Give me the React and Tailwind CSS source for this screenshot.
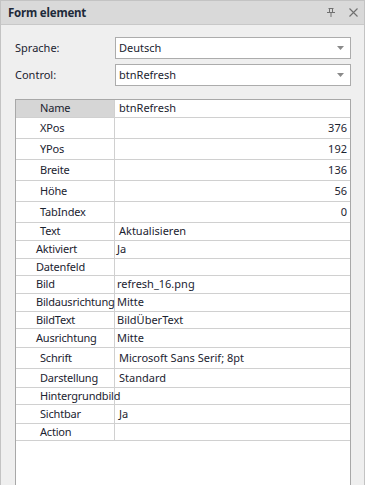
import React from "react";

const rows = [
  { k: "Name", v: "btnRefresh", h: 18, sel: true, big: true },
  { k: "XPos", v: "376", h: 21, right: true, big: true },
  { k: "YPos", v: "192", h: 21, right: true, big: true },
  { k: "Breite", v: "136", h: 21, right: true, big: true },
  { k: "Höhe", v: "56", h: 21, right: true, big: true },
  { k: "TabIndex", v: "0", h: 21, right: true, big: true },
  { k: "Text", v: "Aktualisieren", h: 18, big: true },
  { k: "Aktiviert", v: "Ja", h: 18 },
  { k: "Datenfeld", v: "", h: 17 },
  { k: "Bild", v: "refresh_16.png", h: 18 },
  { k: "Bildausrichtung", v: "Mitte", h: 18 },
  { k: "BildText", v: "BildÜberText", h: 17 },
  { k: "Ausrichtung", v: "Mitte", h: 19 },
  { k: "Schrift", v: "Microsoft Sans Serif; 8pt", h: 21, big: true },
  { k: "Darstellung", v: "Standard", h: 19, big: true },
  { k: "Hintergrundbild", v: "", h: 17, big: true },
  { k: "Sichtbar", v: "Ja", h: 19, big: true },
  { k: "Action", v: "", h: 17, big: true },
];

function Caret() {
  return (
    <svg width="7" height="4" viewBox="0 0 7 4" className="shrink-0">
      <path d="M0 0H7L3.5 4Z" fill="#8a8a8a" />
    </svg>
  );
}

function Select({ value }) {
  return (
    <div className="w-[236px] h-[22px] bg-white border border-[#acacac] flex items-center pl-[3px] pr-[6px] justify-between">
      <span>{value}</span>
      <Caret />
    </div>
  );
}

export default function App() {
  return (
    <div
      className="w-[366px] h-[485px] bg-white overflow-hidden text-[11px] text-[#1b2330]"
      style={{ fontFamily: '"Noto Sans", "Open Sans", sans-serif' }}
    >
      <div className="w-[365px] h-full border-x border-t border-[#c3c3c3] bg-[#efefef] flex flex-col">
        <div className="h-[24px] shrink-0 bg-[#d9d9d9] border-b border-[#c8c8c8] flex items-center justify-between pl-[7px] pr-[6px]">
          <span className="font-bold text-[11.5px] tracking-[-0.2px] text-[#1e2a3a]">Form element</span>
          <div className="flex items-center gap-[14px]">
            <svg width="8" height="9" viewBox="0 0 8 9">
              <path d="M1.5 0.5H6.5M2.5 0.5V4.5M5.5 0.5V4.5M0 4.5H8M4 4.5V9" stroke="#707070" strokeWidth="1" fill="none" />
            </svg>
            <svg width="9" height="9" viewBox="0 0 9 9">
              <path d="M0.5 0.5L8.5 8.5M8.5 0.5L0.5 8.5" stroke="#707070" strokeWidth="1.1" fill="none" />
            </svg>
          </div>
        </div>
        <div className="flex-1 flex flex-col pl-[14px] pr-[13px] pt-[12px]">
          <div className="flex items-center">
            <span className="w-[100px]">Sprache:</span>
            <Select value="Deutsch" />
          </div>
          <div className="flex items-center mt-[5px]">
            <span className="w-[100px]">Control:</span>
            <Select value="btnRefresh" />
          </div>
          <div className="mt-[13px] w-[336px] h-[400px] shrink-0 bg-white border border-[#a8a8a8] flex flex-col">
            {rows.map((r) => (
              <div
                key={r.k}
                className="flex border-b border-[#d0d0d0] shrink-0"
                style={{ height: r.h }}
              >
                <div
                  className={
                    r.sel
                      ? "w-[99px] shrink-0 border-r border-[#d0d0d0] flex items-center whitespace-nowrap tracking-[-0.2px] bg-[#d6d6d6] pl-6"
                      : r.big
                      ? "w-[99px] shrink-0 border-r border-[#d0d0d0] flex items-center whitespace-nowrap tracking-[-0.2px] pl-6"
                      : "w-[99px] shrink-0 border-r border-[#d0d0d0] flex items-center whitespace-nowrap tracking-[-0.2px] pl-5"
                  }
                >
                  <span>{r.k}</span>
                </div>
                <div
                  className={
                    r.right
                      ? "flex-1 flex items-center whitespace-nowrap justify-end pr-[3px]"
                      : r.big
                      ? "flex-1 flex items-center whitespace-nowrap pl-1"
                      : "flex-1 flex items-center whitespace-nowrap pl-[2px]"
                  }
                >
                  <span>{r.v}</span>
                </div>
              </div>
            ))}
          </div>
        </div>
      </div>
    </div>
  );
}
